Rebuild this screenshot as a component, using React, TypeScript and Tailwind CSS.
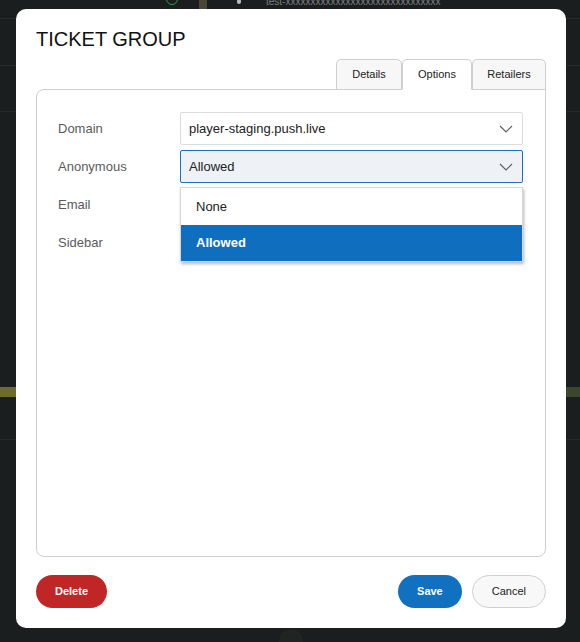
import React from "react";

const rows = [
  { label: "Domain", value: "player-staging.push.live" },
  { label: "Anonymous", value: "Allowed", open: true },
  { label: "Email", value: "" },
  { label: "Sidebar", value: "" },
];

const tabs = [
  { name: "Details", w: "w-[66px]" },
  { name: "Options", w: "w-[70px]" },
  { name: "Retailers", w: "w-[74px]" },
];

function Chevron() {
  return (
    <svg width="14" height="8" viewBox="0 0 14 8" fill="none">
      <polyline points="1,1 7,7 13,1" stroke="#5f5f5f" strokeWidth="1.2" />
    </svg>
  );
}

export default function App() {
  return (
    <div
      className="relative h-[642px] w-full overflow-hidden bg-[#1b1e1f]"
      style={{ fontFamily: '"Liberation Sans", Arial, sans-serif' }}
    >
      {/* ── Page behind the modal ── */}
      <div className="flex flex-col">
        <div className="flex h-[19px] items-start border-b border-[#26292b]">
          <div className="ml-[166px] -mt-[7px] h-[12px] w-[12px] rounded-full border border-[#2e9a4a]" />
          <div className="ml-[21px] h-[9px] w-[8px] bg-[#4a4536]" />
          <div className="ml-[30px] -mt-[1px] h-[5px] w-[4px] rounded-full bg-[#bbb]" />
          <span className="ml-[25px] -mt-[3px] text-[10px] leading-none text-[#7b7f80]">
            test-xxxxxxxxxxxxxxxxxxxxxxxxxxxxxxx
          </span>
        </div>
        <div className="h-[47px] border-b border-[#26292b]" />
        <div className="h-[46px] border-b border-[#26292b]" />
        <div className="h-[275px]" />
        <div className="flex h-[10px] justify-between">
          <div className="w-[16px] bg-[#6e6c2c]" />
          <div className="w-[14px] bg-[#3b4530]" />
        </div>
        <div className="h-[43px] border-b border-[#26292b]" />
        <div className="h-[189px]" />
        <div className="flex justify-center">
          <div className="ml-[2px] h-[13px] w-[24px] rounded-t-full bg-[#202423]" />
        </div>
      </div>

      {/* ── Modal ── */}
      <div className="absolute left-[16px] top-[9px] flex h-[619px] w-[550px] flex-col rounded-[10px] bg-white px-5 pb-5 pt-[18px]">
        <h1 className="m-0 h-6 text-[20px] font-normal leading-6 text-[#111]">
          TICKET GROUP
        </h1>

        <div className="relative z-10 mt-2 -mb-px flex justify-end">
          {tabs.map((t) => (
            <div
              key={t.name}
              className={`flex h-[31px] items-center justify-center rounded-t-[5px] border border-[#cfcfcf] text-[11px] text-[#222] ${t.w} ${
                t.name === "Options" ? "border-b-white bg-white" : "bg-[#f7f7f7]"
              }`}
            >
              {t.name}
            </div>
          ))}
        </div>

        <div className="flex flex-1 flex-col gap-[5px] rounded-lg rounded-tr-none border border-[#cfcfcf] pl-[21px] pr-[22px] pt-[22px]">
          {rows.map((r) => (
            <div key={r.label} className="flex h-[33px] items-center">
              <span className="w-[122px] text-[13px] text-[#5a5a5a]">
                {r.label}
              </span>
              <div className="relative flex-1">
                <div
                  className={`flex h-[33px] items-center justify-between rounded-[2px] border pl-2 pr-[9px] text-[13px] text-[#222] ${
                    r.open
                      ? "border-[#1f6fbd] bg-[#eef2f6]"
                      : "border-[#dcdcdc] bg-white"
                  }`}
                >
                  <span>{r.value}</span>
                  <Chevron />
                </div>

                {r.open && (
                  <div className="absolute left-0 right-0 top-full z-20 mt-1 border border-[#d6d6d6] bg-white pt-px shadow-[1px_2px_3px_rgba(0,0,0,0.28)]">
                    <div className="flex h-9 items-center px-[15px] text-[13px] text-[#222]">
                      None
                    </div>
                    <div className="flex h-9 items-center bg-[#106ebe] px-[15px] text-[13px] font-bold text-white">
                      Allowed
                    </div>
                  </div>
                )}
              </div>
            </div>
          ))}
        </div>

        <div className="mt-[18px] flex items-center justify-between">
          <button className="h-[33px] rounded-full bg-[#c12626] px-[19px] text-[11px] font-bold text-white">
            Delete
          </button>
          <div className="flex gap-[10px]">
            <button className="h-[33px] rounded-full bg-[#1170c0] px-[19px] text-[11px] font-bold text-white">
              Save
            </button>
            <button className="h-[33px] rounded-full border border-[#cfcfcf] bg-[#f8f8f8] px-[19px] text-[11px] text-[#222]">
              Cancel
            </button>
          </div>
        </div>
      </div>
    </div>
  );
}
